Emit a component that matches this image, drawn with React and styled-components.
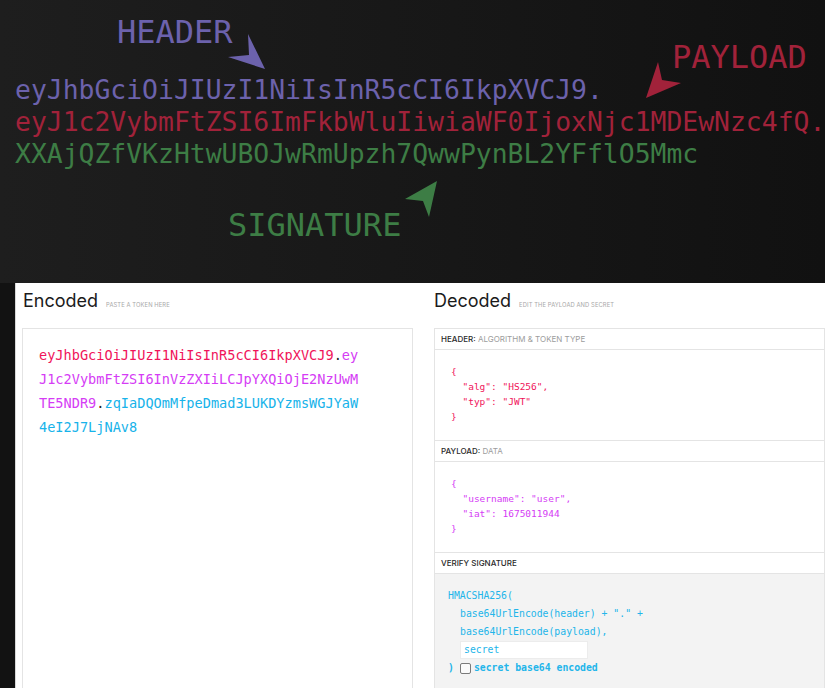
import React from 'react';
import styled, { createGlobalStyle } from 'styled-components';

const GlobalStyle = createGlobalStyle`
  html, body {
    margin: 0;
    padding: 0;
    background: #141414;
  }
  * { box-sizing: border-box; }
`;

const Page = styled.div`
  width: 825px;
  height: 688px;
  overflow: hidden;
  display: flex;
  flex-direction: column;
  background: #121212;
`;

// dark top part with the big coloured token
const Hero = styled.div`
  position: relative;
  height: 283px;
  flex-shrink: 0;
  padding: 74px 0 0 15px;
  background: linear-gradient(90deg, #1e1e1e 0%, #171717 55%, #111111 100%);
  font-family: "DejaVu Sans Mono", "Liberation Mono", monospace;
`;

const TokenLine = styled.div`
  font-size: 26.4px;
  line-height: 32px;
  white-space: nowrap;
  color: ${(p) => p.color};
`;

const Label = styled.div`
  position: absolute;
  left: ${(p) => p.x}px;
  top: ${(p) => p.y}px;
  font-size: 32px;
  line-height: 32px;
  color: ${(p) => p.color};
`;

const Arrows = styled.svg`
  position: absolute;
  left: 0;
  top: 0;
  pointer-events: none;
`;

// white lower part: encoded / decoded columns
const Workspace = styled.div`
  flex: 1;
  margin-left: 15px;
  display: flex;
  background: #fff;
  border-left: 1px solid #d8d8d8;
  font-family: Inter, "Liberation Sans", sans-serif;
`;

const Column = styled.div`
  display: flex;
  flex-direction: column;
  width: ${(p) => (p.$wide ? 'auto' : '405px')};
  flex: ${(p) => (p.$wide ? 1 : 'none')};
  padding-left: ${(p) => (p.$wide ? '13px' : '6px')};
`;

const TitleRow = styled.div`
  display: flex;
  align-items: baseline;
  height: 45px;
  padding: 8px 0 0 ${(p) => (p.$wide ? '0' : '1px')};
`;

const Title = styled.h2`
  margin: 0;
  font-size: 18px;
  line-height: 20px;
  font-weight: 400;
  color: #1b1b1b;
`;

const Hint = styled.span`
  margin-left: 8px;
  font-size: 5.8px;
  text-transform: uppercase;
  color: #a8a8a8;
  letter-spacing: 0.1px;
`;

const EncodedBox = styled.div`
  flex: 1;
  width: 391px;
  border: 1px solid #e4e4e4;
  border-bottom: none;
  padding: 14px 16px;
`;

const Token = styled.div`
  width: 39.6ch;
  word-break: break-all;
  font-family: "DejaVu Sans Mono", monospace;
  font-size: 13.6px;
  line-height: 24px;
`;

const Part = styled.span`
  color: ${(p) => p.color};
`;

const DecodedBox = styled.div`
  flex: 1;
  display: flex;
  flex-direction: column;
  border: 1px solid #e4e4e4;
  border-bottom: none;
`;

const SectionHead = styled.div`
  height: 21px;
  line-height: 20px;
  padding: 0 6px;
  border-bottom: 1px solid #e4e4e4;
  font-size: 8px;
  text-transform: uppercase;
  color: #9c9c9c;
  white-space: nowrap;
  b {
    font-weight: 500;
    color: #2a2a2a;
  }
`;

const Json = styled.pre`
  margin: 0;
  height: ${(p) => p.$h}px;
  padding: 14px 16px 0 16px;
  border-bottom: 1px solid #e4e4e4;
  font-family: "DejaVu Sans Mono", monospace;
  font-size: 9.5px;
  line-height: 15px;
  color: ${(p) => p.color};
`;

const Verify = styled.div`
  flex: 1;
  background: #f3f3f3;
  padding: 13px 13px 0;
  font-family: "DejaVu Sans Mono", monospace;
  font-size: 9.8px;
  line-height: 18px;
  color: #22b5ea;
`;

const CodeLine = styled.div`
  display: flex;
  align-items: center;
  height: 18px;
  padding-left: ${(p) => (p.$indent ? '12px' : '0')};
  white-space: pre;
  font-weight: ${(p) => (p.$bold ? 700 : 400)};
`;

const SecretInput = styled.div`
  width: 128px;
  height: 18px;
  padding-left: 3px;
  background: #fff;
  border: 1px solid #ececec;
  line-height: 16px;
`;

const Checkbox = styled.span`
  display: inline-block;
  flex-shrink: 0;
  width: 11px;
  height: 11px;
  margin: 0 3px 0 6px;
  border: 1.5px solid #7a7a7a;
  border-radius: 2px;
  background: #fafafa;
`;

const PURPLE = '#6c62ac';
const RED = '#a1223a';
const GREEN = '#3d7d45';

export default function App() {
  return (
    <Page>
      <GlobalStyle />
      <Hero>
        <TokenLine color={PURPLE}>eyJhbGciOiJIUzI1NiIsInR5cCI6IkpXVCJ9.</TokenLine>
        <TokenLine color={RED}>eyJ1c2VybmFtZSI6ImFkbWluIiwiaWF0IjoxNjc1MDEwNzc4fQ.</TokenLine>
        <TokenLine color={GREEN}>XXAjQZfVKzHtwUBOJwRmUpzh7QwwPynBL2YFflO5Mmc</TokenLine>

        <Label x={117} y={16} color={PURPLE}>HEADER</Label>
        <Label x={672} y={41} color={RED}>PAYLOAD</Label>
        <Label x={228} y={209} color={GREEN}>SIGNATURE</Label>

        <Arrows width="825" height="283" viewBox="0 0 825 283">
          <polygon points="248,34 265,69 228,57 249,55" fill={PURPLE} />
          <polygon points="658,62 646,98 681,83 662,80" fill={RED} />
          <polygon points="405,199 437,181 429,217 423,201" fill={GREEN} />
        </Arrows>
      </Hero>

      <Workspace>
        <Column>
          <TitleRow>
            <Title>Encoded</Title>
            <Hint>Paste a token here</Hint>
          </TitleRow>
          <EncodedBox>
            <Token>
              <Part color="#f0145a">eyJhbGciOiJIUzI1NiIsInR5cCI6IkpXVCJ9</Part>
              <Part color="#222">.</Part>
              <Part color="#d53cf5">eyJ1c2VybmFtZSI6InVzZXIiLCJpYXQiOjE2NzUwMTE5NDR9</Part>
              <Part color="#222">.</Part>
              <Part color="#17b3ea">zqIaDQOmMfpeDmad3LUKDYzmsWGJYaW4eI2J7LjNAv8</Part>
            </Token>
          </EncodedBox>
        </Column>

        <Column $wide>
          <TitleRow $wide>
            <Title>Decoded</Title>
            <Hint>Edit the payload and secret</Hint>
          </TitleRow>
          <DecodedBox>
            <SectionHead>
              <b>Header:</b> Algorithm &amp; token type
            </SectionHead>
            <Json $h={91} color="#f0145a">{`{
  "alg": "HS256",
  "typ": "JWT"
}`}</Json>
            <SectionHead>
              <b>Payload:</b> Data
            </SectionHead>
            <Json $h={91} color="#d53cf5">{`{
  "username": "user",
  "iat": 1675011944
}`}</Json>
            <SectionHead>
              <b>Verify signature</b>
            </SectionHead>
            <Verify>
              <CodeLine>HMACSHA256(</CodeLine>
              <CodeLine $indent>base64UrlEncode(header) + "." +</CodeLine>
              <CodeLine $indent>base64UrlEncode(payload),</CodeLine>
              <CodeLine $indent>
                <SecretInput>secret</SecretInput>
              </CodeLine>
              <CodeLine $bold>
                {')'}
                <Checkbox />
                {'secret base64 encoded'}
              </CodeLine>
            </Verify>
          </DecodedBox>
        </Column>
      </Workspace>
    </Page>
  );
}
